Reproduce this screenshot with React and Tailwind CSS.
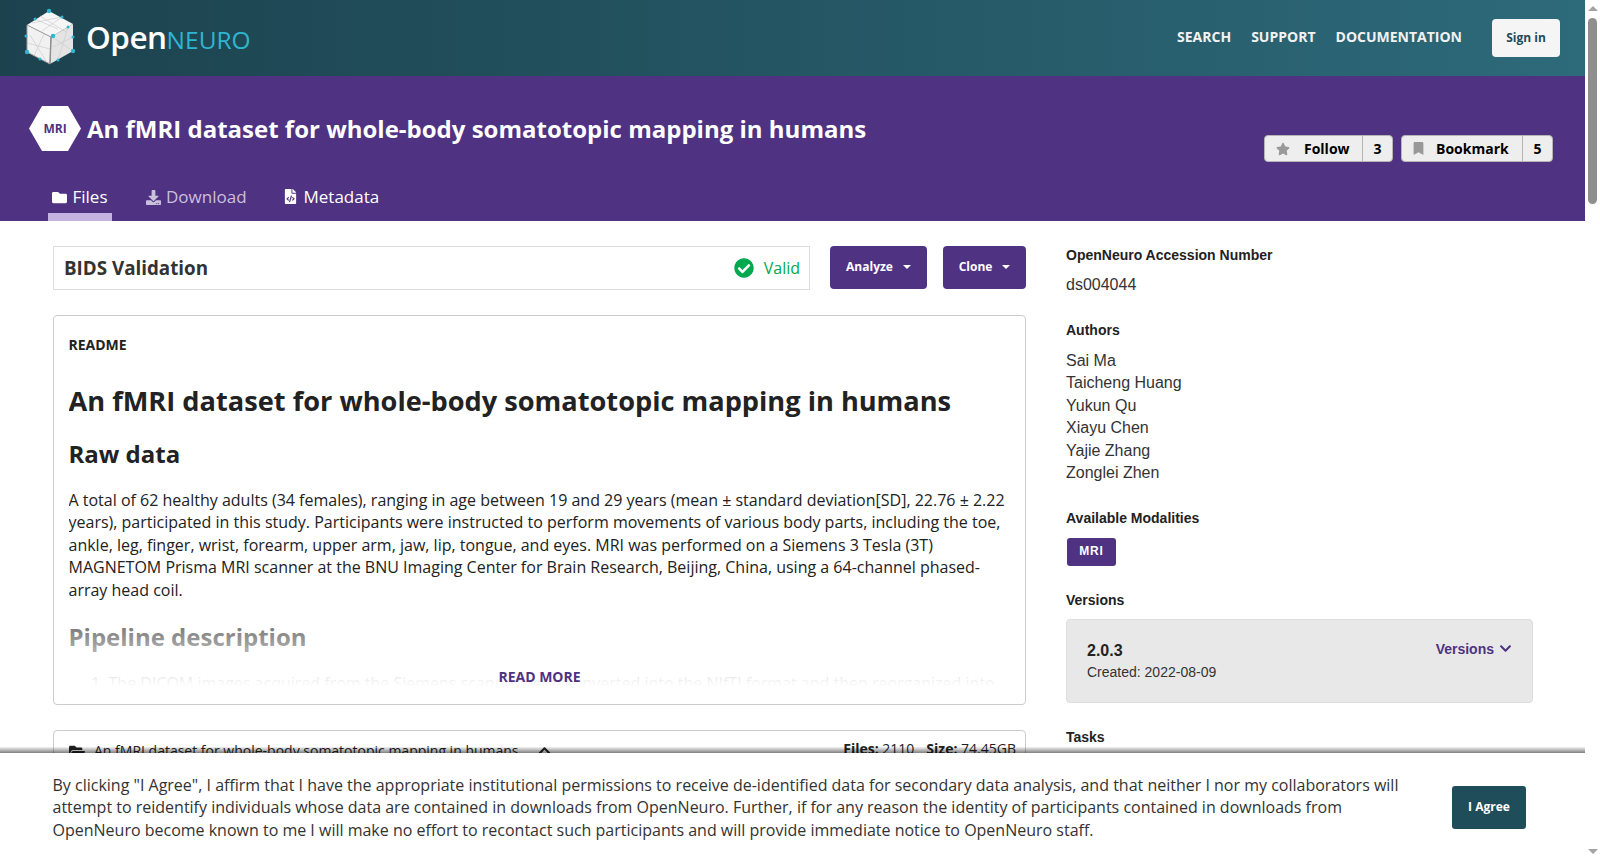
import React from "react";
import {
  FaFolder,
  FaDownload,
  FaFileCode,
  FaStar,
  FaBookmark,
  FaCheckCircle,
  FaFolderOpen,
  FaChevronUp,
  FaChevronDown,
} from "react-icons/fa";

// cube logo, drawn by hand, the numbers are page pixels
function CubeLogo() {
  const dots = [
    [49, 12], [35, 20], [62, 18], [68, 28], [53, 37], [73, 38], [26, 37], [27, 53], [73, 52], [40, 60], [58, 61],
  ];
  return (
    <svg width="54" height="60" viewBox="23 9 54 60" className="shrink-0">
      <polygon points="49,12 73,25 51,38 27,26" fill="#f6f6f6" />
      <polygon points="27,26 51,38 50,65 27,53" fill="#f1f1f1" />
      <polygon points="51,38 73,25 73,52 50,65" fill="#e4e4e4" />
      <path d="M32 24 L62 18 M40 17 L66 33 M35 20 L58 30 M62 18 L42 32 M30 36 L46 62 M27 44 L50 50 M44 35 L34 57 M58 61 L68 28 M53 48 L73 38 M55 40 L70 50" stroke="#cdcdcd" strokeWidth="0.7" fill="none" />
      <path d="M27 26 L51 38 L50 65 L27 53 Z" fill="none" stroke="#a0a0a0" strokeWidth="1" />
      <path d="M51 38 L50 65" fill="none" stroke="#8f8f8f" strokeWidth="1.4" />
      {dots.map((d, i) => (
        <circle key={i} cx={d[0]} cy={d[1]} r={i === 0 || i === 4 || i === 7 || i === 8 ? 2.2 : 1.5} fill="#2fb5cf" />
      ))}
    </svg>
  );
}

function CountButton({ icon, label, count, labelClass, countClass }) {
  return (
    <div className="flex h-[27px] items-center rounded-[4px] border border-[#b5b5b5] bg-[#eeeeee] font-bold text-[14px] text-black">
      <span className={"flex h-full items-center border-r border-[#b5b5b5] " + labelClass}>
        {icon}
        {label}
      </span>
      <span className={"flex h-full items-center justify-center " + countClass}>{count}</span>
    </div>
  );
}

function PurpleButton({ label, width }) {
  return (
    <button className={"flex h-[43px] items-center justify-center gap-[10px] rounded-[4px] bg-[#4f3282] pb-[1px] text-[12px] font-bold text-white " + width}>
      {label}
      <span className="h-0 w-0 border-x-[4px] border-t-[4px] border-x-transparent border-t-white"></span>
    </button>
  );
}

function SideLabel({ children, className }) {
  return <h5 className={"text-[14px] font-bold leading-[20px] text-[#222222] " + className}>{children}</h5>;
}

export default function App() {
  return (
    <div className="relative flex h-[861px] w-[1600px] overflow-hidden bg-white font-['Open_Sans',sans-serif] text-[#222222]">
      <div className="w-[1585px] shrink-0">
        {/* top nav */}
        <header className="flex h-[76px] items-center bg-gradient-to-r from-[#1c424e] to-[#2d6a7a] pl-[23px] pr-[25px]">
          <CubeLogo />
          <div className="mb-[2px] ml-[9px] flex items-baseline">
            <span className="text-[31.5px] font-semibold leading-none tracking-[-0.5px] text-white">Open</span>
            <span className="text-[24.5px] font-normal leading-none text-[#2fb5cf]">NEURO</span>
          </div>
          <nav className="mb-[4px] ml-auto flex items-center gap-[20px] text-[14px] font-bold text-[#f2f2f2]">
            <a>SEARCH</a>
            <a>SUPPORT</a>
            <a>DOCUMENTATION</a>
          </nav>
          <button className="ml-[30px] h-[38px] w-[68px] rounded-[4px] bg-[#f5f5f5] text-[12px] font-bold text-[#1f4a58]">Sign in</button>
        </header>

        {/* dataset header */}
        <section className="h-[145px] bg-[#4f3282] text-white">
          <div className="flex h-[102px] pl-[29px] pr-[32px]">
            <div className="mt-[30px] flex h-[45px] w-[52px] items-center justify-center bg-white text-[12px] font-bold text-[#4f3282] [clip-path:polygon(25%_0,75%_0,100%_50%,75%_100%,25%_100%,0_50%)]">
              MRI
            </div>
            <h1 className="ml-[6px] mt-[36px] text-[24px] font-bold leading-[34px]">An fMRI dataset for whole-body somatotopic mapping in humans</h1>
            <div className="ml-auto mt-[59px] flex gap-[8px]">
              <CountButton
                icon={<FaStar className="mr-[14px] text-[14px] text-[#999999]" />}
                label="Follow"
                count="3"
                labelClass="w-[98px] pl-[11px]"
                countClass="w-[29px]"
              />
              <CountButton
                icon={<FaBookmark className="mr-[11px] text-[13px] text-[#999999]" />}
                label="Bookmark"
                count="5"
                labelClass="w-[121px] pl-[10px]"
                countClass="w-[29px]"
              />
            </div>
          </div>
          <div className="flex h-[43px] pl-[48px] text-[17px]">
            <a className="flex h-full w-[64px] items-start justify-center border-b-[8px] border-[#c5b3e2] pt-[6px]">
              <FaFolder className="mr-[5px] mt-[6px] text-[15px]" />
              Files
            </a>
            <a className="ml-[34px] flex items-start pt-[6px] text-[#c9c0dc]">
              <FaDownload className="mr-[5px] mt-[6px] text-[15px]" />
              Download
            </a>
            <a className="ml-[36px] flex items-start pt-[6px]">
              <FaFileCode className="mr-[6px] mt-[5px] text-[15px]" />
              Metadata
            </a>
          </div>
        </section>

        {/* content */}
        <main className="flex pl-[53px] pt-[25px]">
          <div className="w-[973px] shrink-0">
            <div className="flex">
              <div className="flex h-[44px] flex-1 items-center justify-between border border-[#dddddd] pl-[10px] pr-[9px]">
                <span className="text-[18.8px] font-bold text-[#333333]">BIDS Validation</span>
                <span className="flex items-center text-[16px] text-[#00a94f]">
                  <FaCheckCircle className="mr-[10px] text-[20px]" />
                  Valid
                </span>
              </div>
              <div className="ml-[20px]">
                <PurpleButton label="Analyze" width="w-[97px]" />
              </div>
              <div className="ml-[16px]">
                <PurpleButton label="Clone" width="w-[83px]" />
              </div>
            </div>

            <div className="relative mt-[25px] h-[390px] rounded-[4px] border border-[#cccccc] px-[14.5px] pt-[19px]">
              <h4 className="text-[14px] font-bold leading-[20px]">README</h4>
              <div className="h-[331px] overflow-hidden">
                <h1 className="mt-[26px] text-[27.2px] font-bold leading-[40px]">An fMRI dataset for whole-body somatotopic mapping in humans</h1>
                <h2 className="mt-[16px] text-[24px] font-bold leading-[34px]">Raw data</h2>
                <p className="mt-[18px] text-[16px] leading-[22.4px]">
                  A total of 62 healthy adults (34 females), ranging in age between 19 and 29 years (mean ± standard deviation[SD], 22.76 ± 2.22 years), participated in this study. Participants were instructed to perform movements of various body parts, including the toe, ankle, leg, finger, wrist, forearm, upper arm, jaw, lip, tongue, and eyes. MRI was performed on a Siemens 3 Tesla (3T) MAGNETOM Prisma MRI scanner at the BNU Imaging Center for Brain Research, Beijing, China, using a 64-channel phased-array head coil.
                </p>
                <h2 className="mt-[19px] text-[24px] font-bold leading-[34px]">Pipeline description</h2>
                <ol className="ml-[40px] mt-[18px] list-decimal text-[16px] leading-[22.4px]">
                  <li>The DICOM images acquired from the Siemens scanner were converted into the NIfTI format and then reorganized into the Brain Imaging Data Structure.</li>
                </ol>
              </div>
              {/* fade over the cut text */}
              <div className="absolute inset-x-[14px] bottom-[17px] h-[80px] bg-gradient-to-b from-white/20 to-white"></div>
              <a className="absolute inset-x-0 bottom-[17px] text-center text-[14px] font-bold leading-[20px] text-[#4f3282]">READ MORE</a>
            </div>

            <div className="mt-[25px] flex h-[60px] items-start justify-between rounded-[4px] border border-[#cccccc] pl-[15px] pr-[9px] pt-[9px] text-[14px]">
              <div className="flex items-center">
                <FaFolderOpen className="mr-[9px] text-[16px]" />
                An fMRI dataset for whole-body somatotopic mapping in humans
                <FaChevronUp className="ml-[19px] text-[13px]" />
              </div>
              <div className="-mt-[2px]">
                <b className="font-bold">Files:</b> 2110
                <b className="ml-[12px] font-bold">Size:</b> 74.45GB
              </div>
            </div>
          </div>

          {/* sidebar */}
          <aside className="ml-[40px] w-[467px] shrink-0 font-['Liberation_Sans',Arial,sans-serif] text-[16px] leading-[22.4px] text-[#333333]">
            <SideLabel className="-mt-[1px]">OpenNeuro Accession Number</SideLabel>
            <p className="mt-[9px]">ds004044</p>
            <SideLabel className="mt-[24px]">Authors</SideLabel>
            <div className="mt-[9.6px]">
              <p>Sai Ma</p>
              <p>Taicheng Huang</p>
              <p>Yukun Qu</p>
              <p>Xiayu Chen</p>
              <p>Yajie Zhang</p>
              <p>Zonglei Zhen</p>
            </div>
            <SideLabel className="mt-[23.4px]">Available Modalities</SideLabel>
            <span className="ml-[1px] mt-[10px] flex h-[28px] w-[49px] items-center justify-center rounded-[3px] bg-[#4f3282] pb-[1px] text-[12px] font-bold tracking-[0.8px] text-white">MRI</span>
            <SideLabel className="mt-[24px]">Versions</SideLabel>
            <div className="mt-[9px] flex h-[84px] justify-between rounded-[4px] border border-[#dddddd] bg-[#e8e8e8] pl-[20px] pr-[20px] pt-[20px]">
              <div>
                <div className="text-[16px] font-bold leading-[22px] text-[#222222]">2.0.3</div>
                <div className="text-[14px] leading-[20px]">Created: 2022-08-09</div>
              </div>
              <a className="-mt-[2px] flex h-[22px] items-center text-[14px] font-bold text-[#4f3282]">
                Versions
                <FaChevronDown className="ml-[5px] text-[13px]" />
              </a>
            </div>
            <SideLabel className="mt-[24px]">Tasks</SideLabel>
          </aside>
        </main>
      </div>

      {/* scrollbar */}
      <div className="relative w-[15px] shrink-0 bg-white">
        <div className="absolute left-[3px] top-[6px] h-0 w-0 border-x-[5px] border-b-[5px] border-x-transparent border-b-[#a3a3a3]"></div>
        <div className="absolute left-[3px] top-[18px] h-[186px] w-[9px] rounded-full bg-[#8f8f8f]"></div>
        <div className="absolute bottom-[7px] left-[3px] h-0 w-0 border-x-[5px] border-t-[5px] border-x-transparent border-t-[#a3a3a3]"></div>
      </div>

      {/* agreement bar */}
      <div className="absolute bottom-0 left-0 flex h-[108px] w-[1585px] items-start justify-between bg-white pl-[52.5px] pr-[59px] pt-[21px]">
        <div className="absolute inset-x-0 -top-[6px] h-[6px] bg-gradient-to-b from-black/5 to-black/50"></div>
        <p className="w-[1350px] text-[16px] leading-[22.4px] text-[#333333]">
          By clicking "I Agree", I affirm that I have the appropriate institutional permissions to receive de-identified data for secondary data analysis, and that neither I nor my collaborators will attempt to reidentify individuals whose data are contained in downloads from OpenNeuro. Further, if for any reason the identity of participants contained in downloads from OpenNeuro become known to me I will make no effort to recontact such participants and will provide immediate notice to OpenNeuro staff.
        </p>
        <button className="mt-[12px] h-[43px] w-[74px] rounded-[3px] bg-[#1f4d5a] pb-[1px] text-[12px] font-bold text-white">I Agree</button>
      </div>
    </div>
  );
}
